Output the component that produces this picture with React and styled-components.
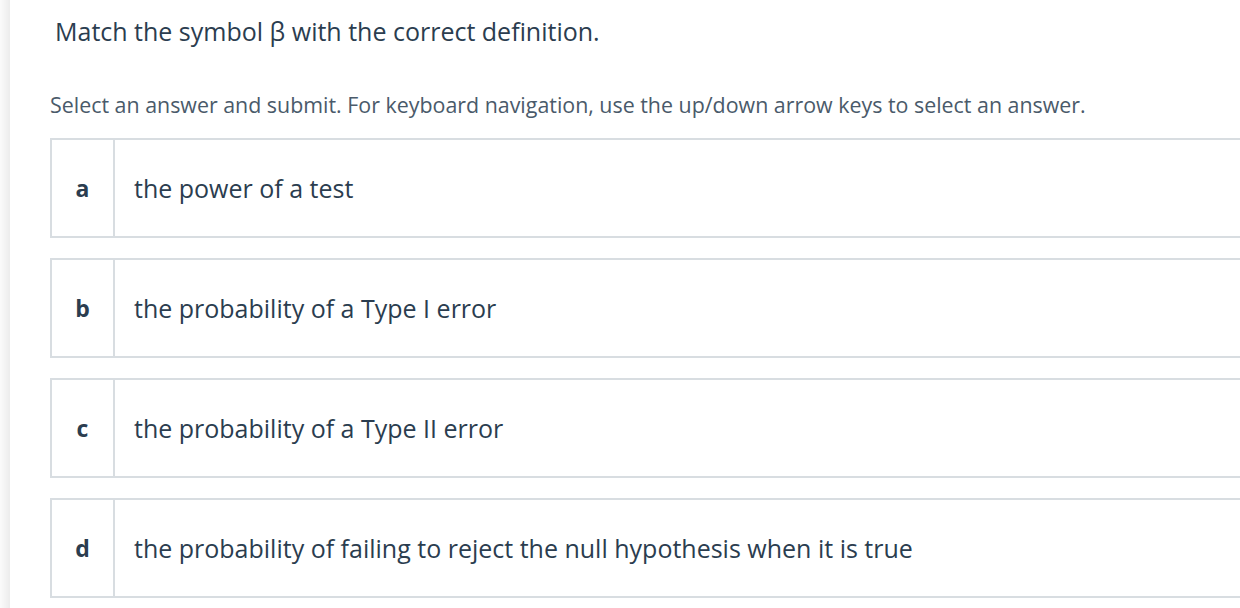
import React from 'react';
import styled, { createGlobalStyle } from 'styled-components';

const GlobalStyle = createGlobalStyle`
  html, body {
    margin: 0;
    padding: 0;
    background: #ffffff;
    overflow: hidden;
  }
  body {
    font-family: "Open Sans", Lato, sans-serif;
    color: #2b3d4f;
  }
`;

const options = [
  { letter: 'a', text: 'the power of a test' },
  { letter: 'b', text: 'the probability of a Type I error' },
  { letter: 'c', text: 'the probability of a Type II error' },
  { letter: 'd', text: 'the probability of failing to reject the null hypothesis when it is true' },
];

export default function App() {
  return (
    <Page>
      <GlobalStyle />
      <Edge />
      <Content>
        <Prompt>Match the symbol β with the correct definition.</Prompt>
        <Instructions>
          Select an answer and submit. For keyboard navigation, use the up/down arrow keys to select an answer.
        </Instructions>
        <Choices>
          {options.map((o) => (
            <Choice key={o.letter}>
              <Letter>{o.letter}</Letter>
              <ChoiceText>{o.text}</ChoiceText>
            </Choice>
          ))}
        </Choices>
      </Content>
    </Page>
  );
}

const Page = styled.div`
  display: flex;
  width: 1240px;
  height: 608px;
  overflow: hidden;
`;

const Edge = styled.div`
  flex: 0 0 10px;
  background: linear-gradient(to right, #fbfbfb, #ececec);
`;

const Content = styled.div`
  flex: 1;
  padding: 0 0 0 40px;
  min-width: 0;
`;

const Prompt = styled.h1`
  margin: 16px 0 0 5px;
  font-size: 25px;
  font-weight: 400;
  line-height: 30px;
  color: #2b3d4f;
`;

const Instructions = styled.p`
  margin: 46px 0 0;
  font-size: 21.4px;
  line-height: 26px;
  color: #4a5a6a;
`;

const Choices = styled.div`
  display: flex;
  flex-direction: column;
  gap: 20px;
  margin-top: 20px;
  margin-right: -20px;
`;

const Choice = styled.div`
  display: flex;
  height: 100px;
  box-sizing: border-box;
  border: 2px solid #d8dde1;
  background: #ffffff;
`;

const Letter = styled.div`
  flex: 0 0 61px;
  display: flex;
  align-items: center;
  justify-content: center;
  border-right: 2px solid #d8dde1;
  font-size: 23px;
  font-weight: 700;
  color: #2b3d4f;
`;

const ChoiceText = styled.div`
  display: flex;
  align-items: center;
  padding-left: 19px;
  font-size: 25px;
  color: #2b3d4f;
`;
